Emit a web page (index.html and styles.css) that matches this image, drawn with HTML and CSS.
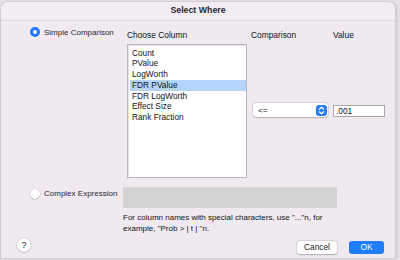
FILE: index.html
```html
<!DOCTYPE html>
<html>
<head>
<meta charset="utf-8">
<link rel="stylesheet" href="styles.css">
</head>
<body>
<div class="window">
  <div class="titlebar">Select Where</div>
  <div class="simple">
    <label class="radio-row simple-radio"><span class="radio on"></span>Simple Comparison</label>
    <div class="col-choose">
      <div class="hdr">Choose Column</div>
      <ul class="list">
        <li>Count</li>
        <li>PValue</li>
        <li>LogWorth</li>
        <li class="sel">FDR PValue</li>
        <li>FDR LogWorth</li>
        <li>Effect Size</li>
        <li>Rank Fraction</li>
      </ul>
    </div>
    <div class="col-comp">
      <div class="hdr">Comparison</div>
      <div class="select"><span>&lt;=</span><span class="stepper"><svg width="11" height="11" viewBox="0 0 11 11"><path d="M3.3 4.2 5.5 2.2 7.7 4.2M3.3 6.8 5.5 8.8 7.7 6.8" fill="none" stroke="#fff" stroke-width="1.2" stroke-linecap="round" stroke-linejoin="round"/></svg></span></div>
    </div>
    <div class="col-value">
      <div class="hdr">Value</div>
      <div class="input">.001</div>
    </div>
  </div>
  <div class="complex">
    <label class="radio-row complex-radio"><span class="radio"></span>Complex Expression</label>
    <div class="expr-col">
      <div class="expr-box"></div>
      <p class="help">For column names with special characters, use "..."n, for<br>example, "Prob &gt; | t | "n.</p>
    </div>
  </div>
  <div class="footer">
    <span class="help-btn">?</span>
    <div class="buttons">
      <span class="btn cancel">Cancel</span>
      <span class="btn ok">OK</span>
    </div>
  </div>
</div>
</body>
</html>
```
FILE: styles.css
```css
* { box-sizing: border-box; }
html, body { margin: 0; padding: 0; }
body {
  width: 400px;
  height: 260px;
  overflow: hidden;
  background: #e4e2e4;
  font-family: "Liberation Sans", Arial, sans-serif;
  font-size: 8px;
  color: #111;
}
.window {
  margin: 2px 0 0 1px;
  width: 394px;
  height: 256px;
  background: #f0e9f0;
  border-radius: 7px 7px 0 0;
  box-shadow: 0 0 0 1px #d3ccd3, 2px 0 3px rgba(0,0,0,0.12);
}
.titlebar {
  height: 19px;
  border-bottom: 1px solid #dcd5dc;
  text-align: center;
  font-weight: bold;
  font-size: 8.8px;
  line-height: 17px;
  color: #2a2a2a;
  background: #f3ecf3;
  border-radius: 7px 7px 0 0;
}
.simple {
  display: flex;
  align-items: flex-start;
  padding-top: 6px;
}
.radio-row {
  display: flex;
  align-items: center;
  height: 10px;
  font-size: 8px;
  color: #2a2a2a;
}
.simple-radio { margin-left: 29px; width: 97px; }
.complex-radio { margin-left: 29px; width: 93px; margin-top: 1px; height: 11px; }
.radio {
  width: 10px;
  height: 10px;
  border-radius: 50%;
  background: #fff;
  box-shadow: 0 0 0 0.5px rgba(0,0,0,0.15), 0 0.5px 1px rgba(0,0,0,0.2);
  margin-right: 4px;
  flex: none;
}
.radio.on {
  background: #fff;
  border: 3px solid #2478f5;
  box-shadow: none;
}
.hdr {
  margin-top: 3px;
  height: 10px;
  line-height: 10px;
  font-size: 8.4px;
  color: #111;
}
.col-choose { width: 124px; }
.list {
  list-style: none;
  margin: 4px 0 0;
  padding: 2.5px 0 0 2px;
  width: 120px;
  height: 134px;
  background: #fff;
  border: 1px solid #bcb7bc;
  box-shadow: inset 1px 1px 0 #e6e2e6;
}
.list li {
  height: 10.75px;
  line-height: 10.75px;
  padding-left: 2px;
  font-size: 8.3px;
  color: #111;
}
.list li.sel { background: #b4d4fb; }
.col-comp { width: 82px; }
.select {
  margin: 63px 0 0 2px;
  width: 75px;
  height: 14px;
  background: #fff;
  border-radius: 3px;
  box-shadow: 0 0 0 0.5px rgba(0,0,0,0.12), 0 0.5px 1.5px rgba(0,0,0,0.2);
  display: flex;
  align-items: center;
  justify-content: space-between;
  padding: 0 1px 0 5px;
  font-size: 8px;
}
.stepper {
  width: 11px;
  height: 11px;
  border-radius: 3px;
  background: #2a7cf5;
  display: flex;
}
.col-value { width: 60px; }
.input {
  margin-top: 65px;
  width: 52px;
  height: 12px;
  background: #fff;
  border: 1px solid #a9a5a9;
  line-height: 10px;
  padding-left: 2px;
  font-size: 8.3px;
}
.complex {
  display: flex;
  align-items: flex-start;
  margin-top: 9px;
}
.expr-col { width: 230px; }
.expr-box {
  width: 214px;
  height: 21px;
  background: #d3d3d3;
}
.help {
  margin: 4px 0 0;
  line-height: 11px;
  font-size: 8px;
  color: #111;
  white-space: nowrap;
}
.footer {
  display: flex;
  justify-content: space-between;
  align-items: flex-start;
  margin-top: 4px;
  padding: 0 11px 0 16px;
}
.help-btn {
  width: 14px;
  height: 14px;
  border-radius: 50%;
  background: #fff;
  box-shadow: 0 0 0 0.5px rgba(0,0,0,0.12), 0 0.5px 1.5px rgba(0,0,0,0.25);
  display: flex;
  align-items: center;
  justify-content: center;
  font-size: 9px;
  color: #222;
}
.buttons {
  display: flex;
  gap: 12px;
  margin-top: 3px;
}
.btn {
  height: 12.5px;
  border-radius: 3px;
  display: flex;
  align-items: center;
  justify-content: center;
  font-size: 8.3px;
}
.cancel {
  width: 40px;
  background: #fff;
  color: #222;
  box-shadow: 0 0 0 0.5px rgba(0,0,0,0.12), 0 0.5px 1.5px rgba(0,0,0,0.22);
}
.ok {
  width: 35px;
  background: #1d7ef7;
  color: #fff;
}
```
